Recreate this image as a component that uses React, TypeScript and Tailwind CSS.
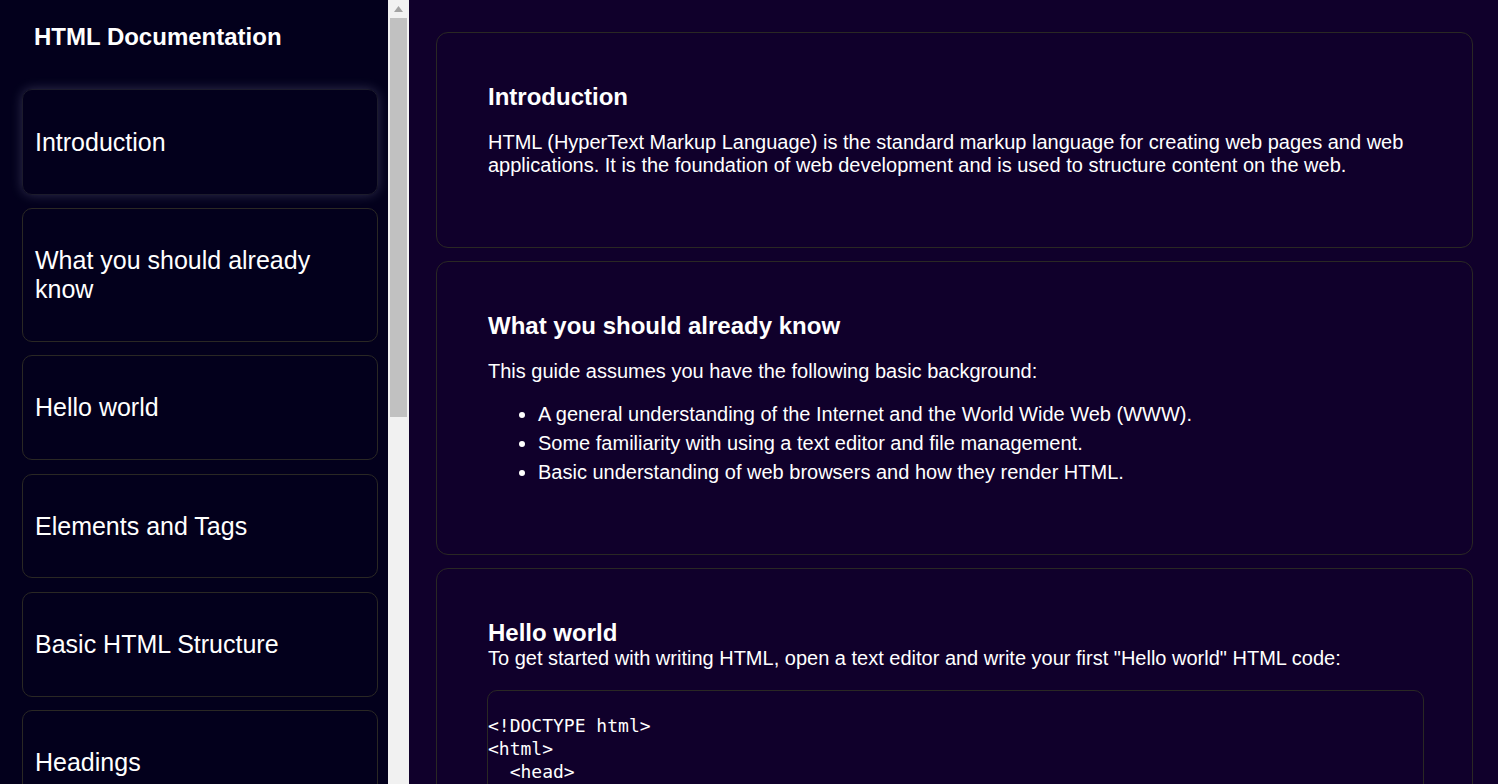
import React from "react";

const navItems = [
  "Introduction",
  "What you should already know",
  "Hello world",
  "Elements and Tags",
  "Basic HTML Structure",
  "Headings",
  "Paragraphs",
  "Links",
];

const code = `
<!DOCTYPE html>
<html>
  <head>
    <title>Hello world</title>
  </head>
  <body>
    <h1>Hello world</h1>
    <p>This is my first web page.</p>
  </body>
</html>
`;

function Sidebar() {
  return (
    <div className="flex h-[784px] w-[409px] shrink-0 bg-[#03001c]">
      <nav className="h-full w-[388px] overflow-hidden">
        <h1 className="pl-[34px] pt-[23px] text-[24px] font-bold leading-[27.6px] text-white">
          HTML Documentation
        </h1>
        <ul className="ml-[22px] mr-[10px] mt-[38.6px] flex flex-col gap-[13.5px]">
          {navItems.map((item, i) => (
            <li
              key={item}
              className={
                i === 0
                  ? "rounded-[10px] border border-[#1c1b2c] px-[12px] py-[37.5px] text-[25px] leading-[28.75px] text-white shadow-[0_0_12px_rgba(210,210,255,0.22)]"
                  : "rounded-[10px] border border-[#2a2824] px-[12px] py-[37px] text-[25px] leading-[28.75px] text-white"
              }
            >
              {item}
            </li>
          ))}
        </ul>
      </nav>
      <div className="flex h-full w-[21px] flex-col bg-[#f1f1f1]">
        <div className="flex h-[18px] items-center justify-center">
          <svg width="9" height="6" viewBox="0 0 9 6">
            <path d="M4.5 0 L9 6 L0 6 Z" fill="#a3a3a3" />
          </svg>
        </div>
        <div className="mx-[2px] h-[399px] bg-[#c1c1c1]" />
      </div>
    </div>
  );
}

function Card({ children }: { children: React.ReactNode }) {
  return (
    <section className="rounded-[12px] border border-[#2a2824] pb-[50px] pl-[50px] pr-[48px] pt-[50px]">
      {children}
    </section>
  );
}

export default function App() {
  return (
    <div
      className="flex h-[784px] w-full overflow-hidden bg-[#10002b] text-white"
      style={{ fontFamily: '"Liberation Sans", Arial, sans-serif' }}
    >
      <Sidebar />
      <main className="h-full flex-1 overflow-hidden pl-[27px] pr-[25px] pt-[32px]">
        <div className="flex flex-col gap-[13.5px]">
          <Card>
            <h2 className="pl-[1px] text-[24px] font-bold leading-[27.6px]">Introduction</h2>
            <p className="my-[20px] pl-[1px] text-[20px] leading-[23px]">
              HTML (HyperText Markup Language) is the standard markup language for creating web pages and web
              applications. It is the foundation of web development and is used to structure content on the web.
            </p>
          </Card>
          <Card>
            <h2 className="pl-[1px] text-[24px] font-bold leading-[27.6px]">What you should already know</h2>
            <p className="mt-[20px] pl-[1px] text-[20px] leading-[23px]">
              This guide assumes you have the following basic background:
            </p>
            <ul className="mb-[20px] mt-[20px] list-disc pl-[51px] text-[20px] leading-[23px]">
              <li className="mb-[6px]">A general understanding of the Internet and the World Wide Web (WWW).</li>
              <li className="mb-[6px]">Some familiarity with using a text editor and file management.</li>
              <li className="mb-[6px]">Basic understanding of web browsers and how they render HTML.</li>
            </ul>
          </Card>
          <Card>
            <h2 className="pl-[1px] text-[24px] font-bold leading-[27.6px]">Hello world</h2>
            <div className="pl-[1px] text-[20px] leading-[23px]">
              To get started with writing HTML, open a text editor and write your first "Hello world" HTML code:
            </div>
            <pre
              className="mt-[20px] rounded-[10px] border border-[#2a2824] text-[18px] leading-[23px]"
              style={{ fontFamily: '"DejaVu Sans Mono", "Liberation Mono", monospace' }}
            >
              {code}
            </pre>
          </Card>
        </div>
      </main>
    </div>
  );
}
